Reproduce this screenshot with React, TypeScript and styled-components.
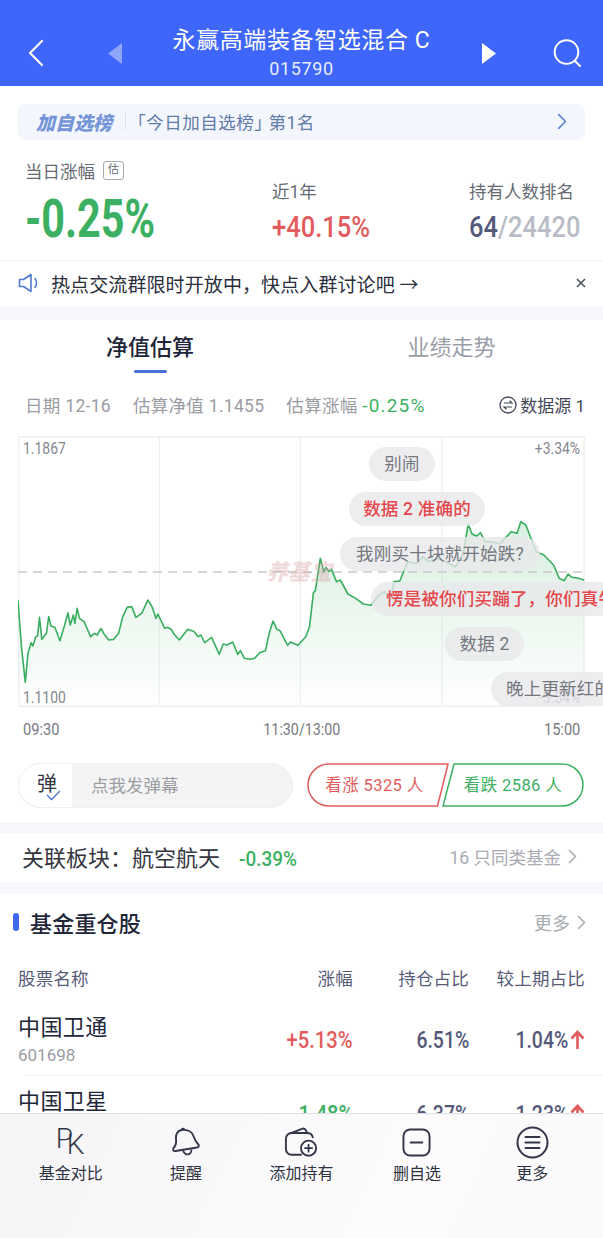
import styled, { createGlobalStyle } from "styled-components";

const CJK = `"Noto Sans CJK SC", sans-serif`;
const BODY = `Roboto, ${CJK}`;
const RED = "#e25c5e";
const GREEN = "#3cb062";
const INK = "#222639";
const SLATE = "#54597a";

const GlobalStyle = createGlobalStyle`
  html, body {
    margin: 0;
    padding: 0;
    background: #fff;
  }
  * {
    box-sizing: border-box;
  }
`;

const Page = styled.div`
  position: relative;
  width: 603px;
  height: 1238px;
  overflow: hidden;
  background: #fff;
  font-family: ${BODY};
  color: ${INK};
`;

// the app's numbers are set in a condensed DIN, no such font here
const Din = styled.span<{ $sx: number; $origin?: string }>`
  display: inline-block;
  transform: scaleX(${(p) => p.$sx});
  transform-origin: ${(p) => p.$origin || "left"} center;
  white-space: nowrap;
`;

const Header = styled.header`
  height: 86px;
  background: #3e66fb;
  display: grid;
  grid-template-columns: 72px 85px 1fr 85px 72px;
  align-items: center;
  color: #fff;
  padding-top: 20px;
  .icon {
    display: block;
    margin: 0 auto;
  }
`;

const HeaderTitle = styled.div`
  text-align: center;
  margin-top: 2px;
  h1 {
    margin: 0;
    font-size: 23px;
    line-height: 30px;
    font-weight: 400;
    letter-spacing: 0.6px;
    white-space: nowrap;
  }
  p {
    margin: 0;
    font-size: 18px;
    line-height: 26px;
    opacity: 0.88;
    letter-spacing: 0.6px;
  }
`;

const RankBanner = styled.div`
  margin: 18px 18px 0;
  height: 36px;
  background: #f3f7fd;
  border-radius: 8px;
  display: flex;
  align-items: center;
  padding: 0 18px 2px 18px;
  color: #5f7ba8;
  font-size: 17.5px;
  b {
    font-size: 19px;
    font-weight: 900;
    font-style: italic;
    color: #7695d8;
    width: 76px;
    white-space: nowrap;
  }
  i {
    width: 1px;
    height: 18px;
    background: #dde3ee;
    margin: 0 11px 0 13px;
  }
  span {
    flex: 1;
    letter-spacing: 0.5px;
    font-feature-settings: "halt";
  }
  em {
    font-style: normal;
    margin-left: 5px;
  }
`;

const Stats = styled.section`
  height: 121px;
  display: grid;
  grid-template-columns: 247px 197px 1fr;
  padding-left: 25px;
  border-bottom: 1px solid #f1f2f4;
`;

const Stat = styled.div<{ $lead?: boolean }>`
  padding-top: ${(p) => (p.$lead ? "18px" : "38px")};
  white-space: nowrap;
`;

const StatLabel = styled.div`
  display: flex;
  align-items: center;
  gap: 8px;
  height: 24px;
  font-size: 17.5px;
  color: #666a72;
`;

const Badge = styled.span`
  width: 21px;
  height: 19px;
  border: 1px solid #a8abb3;
  border-radius: 3px;
  font-size: 11px;
  line-height: 16px;
  text-align: center;
`;

const BigValue = styled.div`
  font-size: 53px;
  line-height: 60px;
  font-weight: 700;
  color: ${GREEN};
  margin-top: 7px;
`;

const MidValue = styled.div<{ $color?: string }>`
  font-size: 30px;
  line-height: 36px;
  font-weight: 500;
  color: ${(p) => p.$color || SLATE};
  margin-top: 7px;
  i {
    font-style: normal;
    color: #b8bcc6;
  }
`;

const Notice = styled.div`
  height: 46px;
  display: flex;
  align-items: center;
  padding: 0 17px 2px 18px;
  font-size: 19px;
  color: #2b2e3b;
  gap: 10px;
  span {
    flex: 1;
    letter-spacing: 0.1px;
    white-space: nowrap;
  }
`;

const Gap = styled.div<{ $h: number }>`
  height: ${(p) => p.$h}px;
  background: #f6f7fb;
`;

const Tabs = styled.div`
  height: 58px;
  display: grid;
  grid-template-columns: 300px 303px;
`;

const Tab = styled.div<{ $active?: boolean }>`
  position: relative;
  text-align: center;
  font-size: 22px;
  line-height: 32px;
  padding-top: 12px;
  font-weight: ${(p) => (p.$active ? 500 : 400)};
  color: ${(p) => (p.$active ? "#20253a" : "#9a9ea8")};
  &::after {
    content: "";
    display: ${(p) => (p.$active ? "block" : "none")};
    position: absolute;
    left: 134px;
    bottom: 5px;
    width: 33px;
    height: 3px;
    border-radius: 2px;
    background: #4a70d8;
  }
`;

const InfoRow = styled.div`
  height: 58px;
  padding: 0 18px 5px 25px;
  display: flex;
  align-items: center;
  font-size: 17.5px;
  letter-spacing: 0.3px;
  color: #9a9ca3;
  gap: 22px;
  white-space: nowrap;
  em {
    font-style: normal;
    font-size: 19px;
    letter-spacing: 1.2px;
    color: ${GREEN};
  }
`;

const SourceLink = styled.div`
  margin-left: auto;
  display: flex;
  align-items: center;
  gap: 3px;
  color: #45485a;
  font-size: 17px;
  letter-spacing: 0;
`;

const Chart = styled.div`
  position: relative;
  margin: 0 18px;
  height: 271px;
  svg {
    display: block;
  }
`;

const AxisText = styled.span<{ $top: number; $left?: number; $right?: number }>`
  position: absolute;
  top: ${(p) => p.$top}px;
  ${(p) => (p.$left !== undefined ? `left: ${p.$left}px;` : "")}
  ${(p) => (p.$right !== undefined ? `right: ${p.$right}px;` : "")}
  font-size: 16px;
  line-height: 20px;
  color: #85878e;
`;

const Watermark = styled.span`
  position: absolute;
  left: 248px;
  top: 122px;
  font-size: 22px;
  line-height: 30px;
  font-weight: 900;
  font-style: italic;
  color: rgba(214, 160, 160, 0.38);
  white-space: nowrap;
`;

const Bubble = styled.div<{ $x: number; $y: number; $hot?: boolean; $w: number }>`
  position: absolute;
  left: ${(p) => p.$x}px;
  top: ${(p) => p.$y}px;
  width: ${(p) => p.$w}px;
  height: 34px;
  padding: 0 15px 3px;
  border-radius: 17px;
  background: rgba(232, 232, 234, 0.78);
  display: flex;
  align-items: center;
  justify-content: ${(p) => (p.$x + p.$w > 585 ? "flex-start" : "center")};
  font-size: 17.5px;
  letter-spacing: 0.2px;
  font-weight: ${(p) => (p.$hot ? 500 : 400)};
  color: ${(p) => (p.$hot ? "#e4474c" : "#75777f")};
  white-space: nowrap;
  overflow: hidden;
`;

const TimeAxis = styled.div`
  height: 44px;
  padding: 12px 23px 0;
  display: flex;
  justify-content: space-between;
  font-size: 17px;
  line-height: 20px;
  color: #777a82;
`;

const ActionRow = styled.div`
  height: 71px;
  padding: 12px 19px 0 18px;
  display: flex;
  gap: 14px;
`;

const DanmakuInput = styled.div`
  width: 275px;
  height: 45px;
  border: 1px solid #eeeff1;
  border-radius: 23px;
  overflow: hidden;
  display: flex;
  align-items: center;
  background: #f4f4f5;
  font-size: 17.5px;
  color: #9b9da3;
  span {
    margin-top: -3px;
  }
`;

const DanmakuToggle = styled.div`
  position: relative;
  width: 53px;
  height: 100%;
  margin-right: 19px;
  background: #fff;
  color: #33363f;
  font-size: 20px;
  padding-left: 18px;
  line-height: 40px;
  svg {
    position: absolute;
    left: 27px;
    top: 26px;
  }
`;

const Votes = styled.div`
  display: flex;
`;

const VoteButton = styled.div<{ $color: string; $w: number }>`
  position: relative;
  width: ${(p) => p.$w}px;
  height: 44px;
  padding-bottom: 2px;
  display: flex;
  align-items: center;
  justify-content: center;
  color: ${(p) => p.$color};
  font-size: 16.5px;
  letter-spacing: 0.4px;
  white-space: nowrap;
  svg {
    position: absolute;
    inset: 0;
  }
  span {
    position: relative;
  }
`;

const RelatedRow = styled.div`
  height: 49px;
  display: flex;
  align-items: center;
  padding: 0 26px 3px 22px;
  font-size: 22px;
  color: #33363f;
  white-space: nowrap;
  em {
    font-style: normal;
    font-weight: 500;
    font-size: 21px;
    color: ${GREEN};
    margin-left: 19px;
    padding-top: 6px;
  }
`;

const MoreLink = styled.div<{ $size: number }>`
  margin-left: auto;
  display: flex;
  align-items: center;
  gap: 7px;
  font-size: ${(p) => p.$size}px;
  color: #a9abb2;
`;

const SectionHead = styled.div`
  height: 60px;
  display: flex;
  align-items: center;
  padding: 0 17px 4px 13px;
  h2 {
    margin: 0 0 0 11px;
    font-size: 22px;
    font-weight: 500;
    color: ${INK};
    letter-spacing: 0.2px;
  }
  i {
    width: 6px;
    height: 18px;
    border-radius: 3px;
    background: #3f68ee;
  }
`;

const TableGrid = styled.div`
  display: grid;
  grid-template-columns: 1fr 80px 116px 116px;
  padding: 0 18px;
  align-items: center;
`;

const TableHead = styled(TableGrid)`
  height: 48px;
  padding-bottom: 2px;
  font-size: 17.5px;
  letter-spacing: 0.2px;
  color: #585c78;
  span:not(:first-child) {
    text-align: right;
  }
`;

const StockRow = styled(TableGrid)`
  height: 74px;
  position: relative;
  &::after {
    content: "";
    position: absolute;
    left: 24px;
    right: 0;
    bottom: 0;
    height: 1px;
    background: #f2f3f5;
  }
`;

const StockName = styled.div`
  align-self: start;
  strong {
    display: block;
    margin-top: 11px;
    font-size: 22px;
    line-height: 30px;
    font-weight: 400;
    color: ${INK};
    letter-spacing: 0.4px;
  }
  small {
    display: block;
    font-size: 17px;
    line-height: 25px;
    color: #9a9ca3;
  }
`;

const Pct = styled.div<{ $color?: string }>`
  text-align: right;
  padding-top: 2px;
  font-size: 24px;
  font-weight: 500;
  color: ${(p) => p.$color || SLATE};
  display: flex;
  justify-content: flex-end;
  align-items: center;
  gap: 2px;
`;

const BottomBar = styled.nav`
  position: absolute;
  left: 0;
  right: 0;
  bottom: 0;
  height: 125px;
  padding: 0 13px;
  display: grid;
  grid-template-columns: repeat(5, 1fr);
  border-top: 1px solid #dedfe2;
  background: linear-gradient(115deg, #f5f5f8 0%, #f9f9fb 38%, #fdfbfb 68%, #f9f9fc 100%);
`;

const BarItem = styled.div`
  display: flex;
  flex-direction: column;
  align-items: center;
  font-size: 16px;
  color: #2e3140;
  padding-top: 10px;
  svg {
    display: block;
  }
`;

const BarIcon = styled.div`
  position: relative;
  width: 36px;
  height: 36px;
  display: flex;
  align-items: center;
  justify-content: center;
`;

const PkMark = styled.div`
  position: relative;
  width: 30px;
  height: 32px;
  font-family: Roboto, sans-serif;
  font-weight: 300;
  color: #34374a;
  span {
    position: absolute;
    line-height: 28px;
    font-size: 28px;
  }
  span:first-child {
    left: 0;
    top: -1px;
  }
  span:last-child {
    left: 11px;
    top: 5px;
  }
`;

const LINE = "46,240 55,380 65,487 72,400 80,368 85,378 92,350 97,348 102,292 108,358 120,340 126,290 132,318 142,322 155,362 165,325 176,278 182,315 190,285 194,310 200,265 206,295 218,305 235,350 245,340 252,345 262,325 270,342 282,360 295,358 308,340 318,292 330,262 342,260 353,292 368,280 384,240 395,260 405,295 410,282 428,325 435,322 445,328 452,342 466,360 476,345 488,328 505,335 515,350 522,345 532,368 550,352 570,403 580,372 590,375 605,366 618,403 625,392 635,415 650,418 662,415 675,398 690,392 700,340 710,303 720,328 728,332 748,376 755,366 775,376 795,350 805,320 815,218 820,212 833,115 842,155 848,142 855,155 862,148 875,185 885,180 905,222 925,235 945,252 965,256 985,225 1000,215 1015,240 1025,185 1040,183 1060,125 1085,130 1100,110 1115,125 1135,115 1160,125 1185,140 1205,100 1218,12 1228,42 1240,48 1250,38 1262,65 1280,65 1300,72 1330,35 1345,40 1355,5 1368,15 1395,95 1415,105 1440,135 1455,175 1468,182 1478,162 1488,172 1505,175 1520,180";

const bubbles = [
  { text: "别闹", x: 351, y: 11, w: 66 },
  { text: "数据 2 准确的", x: 331, y: 56, w: 136, hot: true },
  { text: "我刚买十块就开始跌?", x: 322, y: 101, w: 200 },
  { text: "愣是被你们买蹦了，你们真牛", x: 353, y: 146, w: 260, hot: true },
  { text: "数据 2", x: 427, y: 191, w: 79 },
  { text: "晚上更新红的", x: 473, y: 236, w: 150 },
];

const stocks = [
  { name: "中国卫通", code: "601698", change: "+5.13%", color: RED, share: "6.51%", prev: "1.04%" },
  { name: "中国卫星", code: "600118", change: "-1.48%", color: GREEN, share: "6.37%", prev: "1.23%" },
];

function Chevron({ size = 14, color = "#a9abb2" }: { size?: number; color?: string }) {
  return (
    <svg width={size * 0.6} height={size} viewBox="0 0 9 15" fill="none">
      <path d="M1.5 1.5 7.5 7.5 1.5 13.5" stroke={color} strokeWidth="1.5" strokeLinecap="round" strokeLinejoin="round" />
    </svg>
  );
}

function UpArrow() {
  return (
    <svg width="15" height="20" viewBox="0 0 15 20" fill="none">
      <path d="M7.5 19V2M1.5 8.5 7.5 2l6 6.5" stroke={RED} strokeWidth="2.6" />
    </svg>
  );
}

export default function App() {
  return (
    <Page>
      <GlobalStyle />
      <Header>
        <svg className="icon" width="18" height="28" viewBox="0 0 18 28" fill="none">
          <path d="M15 2 3 14l12 12" stroke="#fff" strokeWidth="2.2" strokeLinecap="round" strokeLinejoin="round" />
        </svg>
        <svg className="icon" width="14" height="21" viewBox="0 0 14 21">
          <path d="M14 0v21L0 10.5z" fill="#fff" opacity="0.42" />
        </svg>
        <HeaderTitle>
          <h1>永赢高端装备智选混合 C</h1>
          <p>015790</p>
        </HeaderTitle>
        <svg className="icon" width="14" height="21" viewBox="0 0 14 21">
          <path d="M0 0v21l14-10.5z" fill="#fff" />
        </svg>
        <svg className="icon" width="30" height="28" viewBox="0 0 30 28" fill="none">
          <circle cx="14.5" cy="13" r="11.8" stroke="#fff" strokeWidth="2" />
          <path d="m23 22 5 5" stroke="#fff" strokeWidth="2" strokeLinecap="round" />
        </svg>
      </Header>

      <RankBanner>
        <b>加自选榜</b>
        <i />
        <span>
          「今日加自选榜」<em>第1名</em>
        </span>
        <Chevron size={17} color="#5f86cf" />
      </RankBanner>

      <Stats>
        <Stat $lead>
          <StatLabel>
            当日涨幅
            <Badge>估</Badge>
          </StatLabel>
          <BigValue>
            <Din $sx={0.78}>-0.25%</Din>
          </BigValue>
        </Stat>
        <Stat>
          <StatLabel>近1年</StatLabel>
          <MidValue $color={RED}>
            <Din $sx={0.85}>+40.15%</Din>
          </MidValue>
        </Stat>
        <Stat>
          <StatLabel>持有人数排名</StatLabel>
          <MidValue>
            <Din $sx={0.85}>
              64<i>/24420</i>
            </Din>
          </MidValue>
        </Stat>
      </Stats>

      <Notice>
        <svg width="23" height="20" viewBox="0 0 23 20" fill="none">
          <path d="M1.5 6.5h4L13 1.5v17l-7.5-5h-4z" stroke="#4f7bd0" strokeWidth="1.6" strokeLinejoin="round" />
          <path d="M17 5.5c2 2.5 2 6.5 0 9" stroke="#4f7bd0" strokeWidth="1.6" strokeLinecap="round" />
        </svg>
        <span>热点交流群限时开放中，快点入群讨论吧 →</span>
        <svg width="10" height="10" viewBox="0 0 10 10" fill="none">
          <path d="m1 1 8 8M9 1 1 9" stroke="#4a4d5a" strokeWidth="1.5" />
        </svg>
      </Notice>

      <Gap $h={13} />

      <Tabs>
        <Tab $active>净值估算</Tab>
        <Tab>业绩走势</Tab>
      </Tabs>

      <InfoRow>
        <span>日期 12-16</span>
        <span>估算净值 1.1455</span>
        <span>
          估算涨幅 <em>-0.25%</em>
        </span>
        <SourceLink>
          <svg width="18" height="18" viewBox="0 0 18 18" fill="none">
            <circle cx="9" cy="9" r="8" stroke="#45485a" strokeWidth="1.3" />
            <path d="M5 7h8l-2.5-2.2M13 11H5l2.5 2.2" stroke="#45485a" strokeWidth="1.2" />
          </svg>
          数据源 1
        </SourceLink>
      </InfoRow>

      <Chart>
        <svg width="567" height="271" viewBox="46 -252 1476 813" preserveAspectRatio="none">
          <defs>
            <linearGradient id="area" x1="0" y1="0" x2="0" y2="1">
              <stop offset="0" stopColor="#3cb062" stopOpacity="0.2" />
              <stop offset="1" stopColor="#3cb062" stopOpacity="0" />
            </linearGradient>
          </defs>
          <rect x="47" y="-250" width="1473" height="809" fill="none" stroke="#f1f1f3" strokeWidth="2" vectorEffect="non-scaling-stroke" />
          {[414, 781, 1150].map((x) => (
            <line key={x} x1={x} x2={x} y1="-250" y2="559" stroke="#f0f0f2" strokeWidth="1.2" vectorEffect="non-scaling-stroke" />
          ))}
          <polygon points={`46,559 ${LINE} 1520,559`} fill="url(#area)" />
          <line x1="46" x2="1520" y1="156" y2="156" stroke="#c9cacd" strokeWidth="1.4" strokeDasharray="9 6" vectorEffect="non-scaling-stroke" />
          <polyline points={LINE} fill="none" stroke="#3aae60" strokeWidth="1.6" strokeLinejoin="round" vectorEffect="non-scaling-stroke" />
        </svg>
        <AxisText $top={3} $left={5}>
          <Din $sx={0.87}>1.1867</Din>
        </AxisText>
        <AxisText $top={3} $right={5}>
          <Din $sx={0.87} $origin="right">+3.34%</Din>
        </AxisText>
        <AxisText $top={252} $left={5}>
          <Din $sx={0.87}>1.1100</Din>
        </AxisText>
        <AxisText $top={252} $right={5}>
          <Din $sx={0.87} $origin="right">-3.34%</Din>
        </AxisText>
        <Watermark>养基宝</Watermark>
        {bubbles.map((b) => (
          <Bubble key={b.text} $x={b.x} $y={b.y} $w={b.w} $hot={b.hot}>
            {b.text}
          </Bubble>
        ))}
      </Chart>

      <TimeAxis>
        <Din $sx={0.86}>09:30</Din>
        <Din $sx={0.84} $origin="center">11:30/13:00</Din>
        <Din $sx={0.86} $origin="right">15:00</Din>
      </TimeAxis>

      <ActionRow>
        <DanmakuInput>
          <DanmakuToggle>
            弹
            <svg width="15" height="11" viewBox="0 0 15 11" fill="none">
              <path d="m1 5 4.5 4.5L14 1" stroke="#4a70d8" strokeWidth="1.3" />
            </svg>
          </DanmakuToggle>
          <span>点我发弹幕</span>
        </DanmakuInput>
        <Votes>
          <VoteButton $color={RED} $w={135}>
            <svg width="142" height="44" viewBox="0 0 142 44" fill="none">
              <path d="M22 1h119l-10.5 42H22a21 21 0 0 1 0-42Z" stroke={RED} strokeWidth="1.5" />
            </svg>
            <span>看涨 5325 人</span>
          </VoteButton>
          <VoteButton $color={GREEN} $w={142}>
            <svg width="142" height="44" viewBox="0 0 142 44" fill="none">
              <path d="M12 1h108a21 21 0 0 1 0 42H1Z" stroke={GREEN} strokeWidth="1.5" />
            </svg>
            <span>看跌 2586 人</span>
          </VoteButton>
        </Votes>
      </ActionRow>

      <Gap $h={11} />

      <RelatedRow>
        关联板块：航空航天
        <em>
          <Din $sx={0.9}>-0.39%</Din>
        </em>
        <MoreLink $size={17.5}>
          16 只同类基金
          <Chevron size={15} />
        </MoreLink>
      </RelatedRow>

      <Gap $h={12} />

      <SectionHead>
        <i />
        <h2>基金重仓股</h2>
        <MoreLink $size={18}>
          更多
          <Chevron size={15} />
        </MoreLink>
      </SectionHead>

      <TableHead>
        <span>股票名称</span>
        <span>涨幅</span>
        <span>持仓占比</span>
        <span>较上期占比</span>
      </TableHead>

      {stocks.map((s) => (
        <StockRow key={s.code}>
          <StockName>
            <strong>{s.name}</strong>
            <small>{s.code}</small>
          </StockName>
          <Pct $color={s.color}>
            <Din $sx={0.84} $origin="right">{s.change}</Din>
          </Pct>
          <Pct>
            <Din $sx={0.81} $origin="right">{s.share}</Din>
          </Pct>
          <Pct>
            <Din $sx={0.81} $origin="right">{s.prev}</Din>
            <UpArrow />
          </Pct>
        </StockRow>
      ))}

      <BottomBar>
        <BarItem>
          <BarIcon>
            <PkMark>
              <span>P</span>
              <span>K</span>
            </PkMark>
          </BarIcon>
          基金对比
        </BarItem>
        <BarItem>
          <BarIcon>
            <svg width="30" height="30" viewBox="0 0 30 30" fill="none">
              <path d="M11 3C6 3.5 4.5 8 5 12c.5 4-.5 7-2.5 9-1 2 0 3.5 2 3L26 20.500c2-.5 2.500-2 1-3.500-3-3-4-6-5-9-1-3.500-6-5.500-11-5Z" stroke="#34374a" strokeWidth="1.9" strokeLinejoin="round" />
              <path d="M12 23.500c1 3.500 4.500 5 7 3 1-1 1.500-3 1.500-4" stroke="#34374a" strokeWidth="1.8" />
              <path d="M10.500 3c.2-1.500 2-2 2.800-.5" stroke="#34374a" strokeWidth="1.8" />
            </svg>
          </BarIcon>
          提醒
        </BarItem>
        <BarItem>
          <BarIcon>
            <svg width="34" height="33" viewBox="0 0 36 34" fill="none">
              <path d="M18 30H8a6 6 0 0 1-6-6V13a6 6 0 0 1 6-6h17a6 6 0 0 1 5.500 4.500" stroke="#34374a" strokeWidth="2" strokeLinecap="round" />
              <path d="M6 7.500 19 2.500c2-.7 3.500 0 4.500 2l1 2.500" stroke="#34374a" strokeWidth="2" strokeLinejoin="round" />
              <circle cx="26" cy="23" r="8" stroke="#34374a" strokeWidth="2" />
              <path d="M26 18.500v9M21.500 23h9" stroke="#34374a" strokeWidth="1.8" />
            </svg>
          </BarIcon>
          添加持有
        </BarItem>
        <BarItem>
          <BarIcon>
            <svg width="29" height="29" viewBox="0 0 30 30" fill="none">
              <rect x="1.500" y="1.500" width="27" height="27" rx="7" stroke="#34374a" strokeWidth="2" />
              <path d="M9 15h12" stroke="#34374a" strokeWidth="2" strokeLinecap="round" />
            </svg>
          </BarIcon>
          删自选
        </BarItem>
        <BarItem>
          <BarIcon>
            <svg width="33" height="33" viewBox="0 0 33 33" fill="none">
              <circle cx="16.500" cy="16.500" r="15" stroke="#34374a" strokeWidth="2" />
              <path d="M9.500 11h14M9.500 16.500h14M9.500 22h14" stroke="#34374a" strokeWidth="2" strokeLinecap="round" />
            </svg>
          </BarIcon>
          更多
        </BarItem>
      </BottomBar>
    </Page>
  );
}
